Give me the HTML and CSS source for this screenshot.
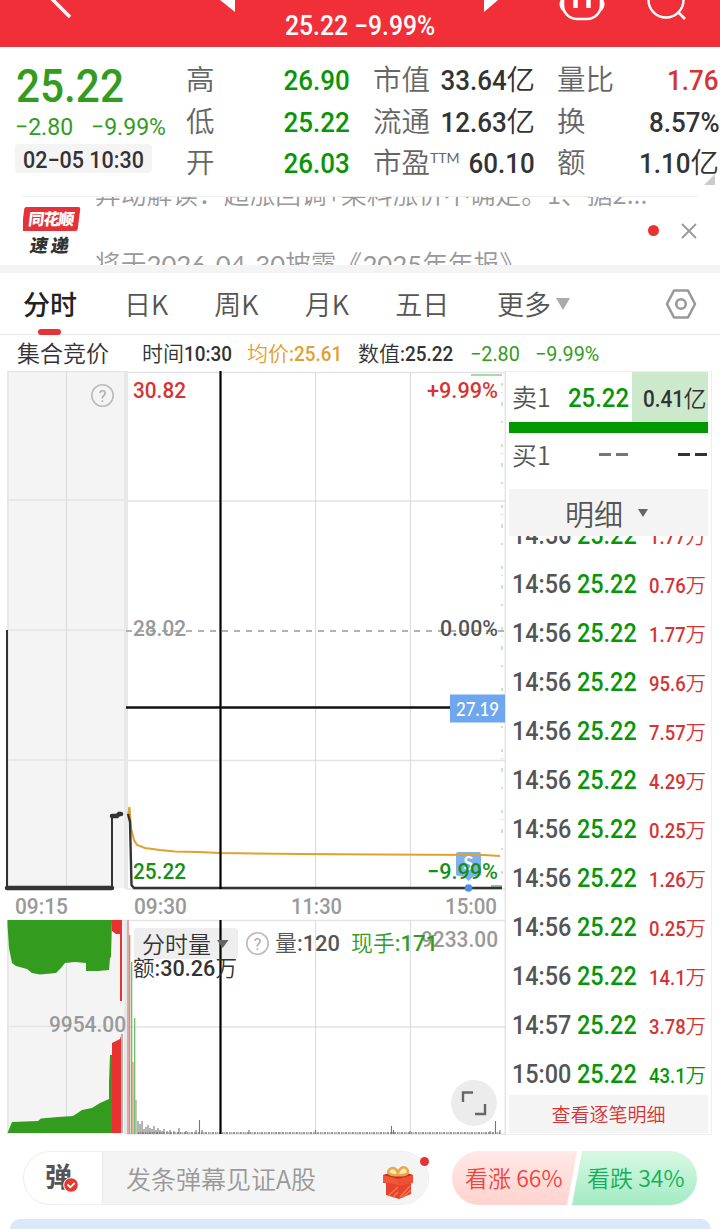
FILE: index.html
```html
<!DOCTYPE html>
<html lang="zh-CN">
<head>
    <meta charset="UTF-8">
    <meta name="viewport" content="width=device-width, initial-scale=1.0">
    <title>分时行情</title>
    <link rel="stylesheet" href="styles.css">
</head>
<body>
    <header class="topbar">
        <svg class="topbar-icons" width="720" height="47" viewBox="0 0 720 47">
            <path d="M46 -7L70 17" stroke="#fff" stroke-width="3.5" fill="none"/>
            <path d="M220 0H235V12Z" fill="#fff"/>
            <path d="M484 0H498L484 12Z" fill="#fff"/>
            <rect x="563" y="-18" width="38" height="37" rx="14" fill="none" stroke="#fff" stroke-width="2.6"/>
            <path d="M562 0Q559 5 563 10M602 0Q605 5 601 10" fill="none" stroke="#fff" stroke-width="2.5"/>
            <path d="M575.5 0V8M588.5 0V8" stroke="#fff" stroke-width="4.5"/>
            <circle cx="666" cy="0" r="17.5" fill="none" stroke="#fff" stroke-width="2.4"/>
            <path d="M678 12L685 19" stroke="#fff" stroke-width="2.6"/>
        </svg>
        <div class="topbar-price"><span class="num">25.22 −9.99%</span></div>
    </header>

    <section class="quote">
        <div class="quote-main">
            <div class="price"><span class="num">25.22</span></div>
            <div class="change"><span class="num">−2.80</span><span class="num">−9.99%</span></div>
            <div class="time"><span class="num">02−05 10:30</span></div>
        </div>
        <dl class="stats stats-a">
            <dt>高</dt><dd class="green"><span class="num">26.90</span></dd>
            <dt>低</dt><dd class="green"><span class="num">25.22</span></dd>
            <dt>开</dt><dd class="green"><span class="num">26.03</span></dd>
        </dl>
        <dl class="stats stats-b">
            <dt>市值</dt><dd><span class="num">33.64</span>亿</dd>
            <dt>流通</dt><dd><span class="num">12.63</span>亿</dd>
            <dt>市盈<sup>TTM</sup></dt><dd><span class="num">60.10</span></dd>
        </dl>
        <dl class="stats stats-c">
            <dt>量比</dt><dd class="red"><span class="num">1.76</span></dd>
            <dt>换</dt><dd><span class="num">8.57%</span></dd>
            <dt>额</dt><dd><span class="num">1.10</span>亿</dd>
        </dl>
        <i class="corner"></i>
    </section>

    <section class="news">
        <div class="logo">
            <div class="logo-top">同花顺</div>
            <div class="logo-bottom">速递</div>
        </div>
        <div class="news-lines">
            <p>异动解读：超涨回调+染料涨价不确定。1、据2...</p>
            <p>将于<span class="date">2026-04-30</span>披露《<span class="date">2025</span>年年报》</p>
        </div>
        <i class="dot"></i>
        <svg class="close" width="16" height="16" viewBox="0 0 16 16"><path d="M1 1L15 15M15 1L1 15" stroke="#999" stroke-width="1.8"/></svg>
    </section>

    <nav class="tabs">
        <a class="tab active">分时</a>
        <a class="tab">日K</a>
        <a class="tab">周K</a>
        <a class="tab">月K</a>
        <a class="tab">五日</a>
        <a class="tab more">更多<i class="caret"></i></a>
        <svg class="setting" width="32" height="32" viewBox="0 0 32 32" fill="none" stroke="#999" stroke-linejoin="round">
            <path d="M9 2.5H23L30 16L23 29.500H9L2 16Z" stroke-width="2.6"/>
            <circle cx="16" cy="16" r="4.800" stroke-width="2.600"/>
        </svg>
    </nav>

    <div class="info">
        <span class="info-auction">集合竞价</span>
        <span class="info-time">时间<span class="num">10:30</span></span>
        <span class="info-avg">均价<span class="num">:25.61</span></span>
        <span class="info-value">数值<span class="num">:25.22</span></span>
        <span class="info-diff"><span class="num">−2.80</span></span>
        <span class="info-rate"><span class="num">−9.99%</span></span>
    </div>

    <main class="board">
        <svg class="chart" width="506" height="764" viewBox="0 371 506 764">
            <!-- auction panel -->
            <rect x="7" y="371" width="118" height="517" fill="#f4f4f4"/>
            <rect x="7" y="920" width="118" height="214" fill="#f4f4f4"/>
            <g stroke="#e4e4e4" stroke-width="1.500" fill="none">
                <path d="M7 371.500H126M7 500H126M7 630H126M7 760H126M7 1026.500H126M8 371V888M8 920V1134"/>
                <path d="M126 372.500H505M126 501H505M126 760.500H505M126 889H505M7 920.500H505M126 1027H505M126 1134H505M505.300 371V1135"/>
            </g>
            <path d="M66.500 371V888M66.500 920V1134M315.500 372V888M410.500 372V888M315.500 920V1134M410.500 920V1134" stroke="#ddd" stroke-width="1.200"/>
            <path d="M126 371V889M126 920V1134" stroke="#e8e8e8" stroke-width="4"/>
            <path d="M126 631H504" stroke="#999" stroke-width="1.500" stroke-dasharray="6 6"/>

            <!-- pale depth marks by the right edge -->
            <path d="M471 375H502" stroke="#8ccc8c" stroke-width="1.500"/>
            <path d="M502 383V878" stroke="#a9d8a9" stroke-width="1.300" stroke-dasharray="3 6 1 9 4 15 2 21"/>
            <path d="M491 886H502" stroke="#8ccc8c" stroke-width="2"/>

            <!-- auction price -->
            <path d="M7 630V888M112 888V816" stroke="#333" stroke-width="2"/>
            <path d="M7 888H112" stroke="#333" stroke-width="4.500" stroke-linecap="round"/>
            <path d="M112 816H117L119 814H121" stroke="#333" stroke-width="4.500" stroke-linecap="round" fill="none"/>

            <!-- marker -->
            <path d="M458 852H479Q481 852 481 854V874Q481 876 479 876H474L468.500 881L463 876H458Q456 876 456 874V854Q456 852 458 852Z" fill="#7db1f2"/>
            <text x="468.500" y="870" class="marker" text-anchor="middle">S</text>

            <!-- average and price -->
            <path d="M128 815L129.500 807L131 828L134 840L137 845L145 848L160 850L175 851.500L198 852L220 853L300 854L380 854.500L484 855L500 856" stroke="#e2a02c" stroke-width="2" fill="none"/>
            <path d="M128 814L130 822L131.500 885L134 888H502" stroke="#333" stroke-width="2.400" fill="none"/>
            <circle cx="468.500" cy="888" r="3.800" fill="#4a8fe7"/>

            <!-- auction volume -->
            <path d="M7.500 920V925L9 948L12 963L16 966L27 969L32 973L40 974.500L56 973L61 968L65 963L75 962L86 963V971L98 971L109 970L110 958L111 957L112 920Z" fill="#339c1f"/>
            <path d="M112 920H122V1001H120V934L116 934L112 931Z" fill="#e83232"/>
            <path d="M7.500 1133L12 1122L38 1121L41 1118.500L58 1117L73 1116L82 1110L92 1108L100 1103L109 1099V1082L110 1055H112V1133Z" fill="#339c1f"/>
            <path d="M112 1133V1043L120 1039L121 1036V1133Z" fill="#e83232"/>
            <path d="M122 1034V1133" stroke="#777" stroke-width="1"/>

            <!-- minute volume -->
            <path d="M128 920V1134" stroke="#e9a3a3" stroke-width="2"/>
            <path d="M129.700 935V1134M131.700 962V1134M134.700 1018V1134" stroke="#6bb35c" stroke-width="1.200"/>
            <path d="M133 1062V1134" stroke="#e08a7a" stroke-width="1.200"/>
            <path d="M136 1100V1134" stroke="#8fae8a" stroke-width="1.200"/>
            <path d="M138 1121V1134M140 1124V1134M142 1121V1134M144 1129V1134M146 1127V1134M148 1125V1134M150 1128V1134M152 1129V1134M154 1126V1134M156 1130V1134M158 1128V1134M160 1130V1134M162 1131V1134M164 1129V1134M167 1131V1134M170 1130V1134M174 1131V1134M179 1128V1134M186 1131V1134M196 1130V1134M199.500 1120V1134M202 1130V1134M249 1130V1134M279 1132V1134M315.500 1130V1134M391.500 1126V1134M393.500 1130V1134M410 1131V1134M490 1131V1134M495.500 1121V1134M500 1130V1134" stroke="#777" stroke-width="1.100"/>
            <path d="M138 1133H500" stroke="#777" stroke-width="1.500" stroke-dasharray="1.500 .8 1 .7 2 1"/>

            <rect x="134" y="928" width="104" height="31" rx="3" fill="#eee"/>

            <!-- crosshair -->
            <path d="M220.500 371V889M220.500 920V1134" stroke="#000" stroke-width="2.200"/>
            <path d="M217 940H228.500L222.700 948Z" fill="#666"/>
            <path d="M126 707.500H450" stroke="#111" stroke-width="2.400"/>
            <rect x="450" y="694.500" width="55" height="28" fill="#6ea7ee"/>
            <text x="456" y="716" class="cross-label" textLength="43" lengthAdjust="spacingAndGlyphs">27.19</text>

            <g class="chart-text" font-size="22">
                <text x="133" y="398" fill="#d63434" textLength="53" lengthAdjust="spacingAndGlyphs">30.82</text>
                <text x="427" y="398" fill="#d63434" textLength="71" lengthAdjust="spacingAndGlyphs">+9.99%</text>
                <text x="133" y="636" fill="#999" textLength="53" lengthAdjust="spacingAndGlyphs">28.02</text>
                <text x="440" y="636" fill="#555" textLength="58" lengthAdjust="spacingAndGlyphs">0.00%</text>
                <text x="133" y="879" fill="#149114" textLength="53" lengthAdjust="spacingAndGlyphs">25.22</text>
                <text x="427" y="879" fill="#149114" textLength="71" lengthAdjust="spacingAndGlyphs">−9.99%</text>
                <text x="15" y="914" fill="#999" textLength="53" lengthAdjust="spacingAndGlyphs">09:15</text>
                <text x="134" y="914" fill="#999" textLength="53" lengthAdjust="spacingAndGlyphs">09:30</text>
                <text x="291" y="914" fill="#999" textLength="51" lengthAdjust="spacingAndGlyphs">11:30</text>
                <text x="445" y="914" fill="#999" textLength="52" lengthAdjust="spacingAndGlyphs">15:00</text>
                <text x="49" y="1032" fill="#999" textLength="77" lengthAdjust="spacingAndGlyphs">9954.00</text>
                <text x="421" y="947" fill="#999" textLength="77" lengthAdjust="spacingAndGlyphs">9233.00</text>
                <text x="142" y="953" class="cn" fill="#333" font-size="23">分时量</text>
                <text x="133" y="976" class="cn" fill="#333" textLength="104" lengthAdjust="spacingAndGlyphs">额<tspan class="fig">:30.26</tspan>万</text>
                <text x="275" y="951" class="cn" fill="#555" textLength="65" lengthAdjust="spacingAndGlyphs">量<tspan class="fig">:120</tspan></text>
                <text x="351" y="951" class="cn" fill="#339c1f" textLength="87" lengthAdjust="spacingAndGlyphs">现手<tspan class="fig">:171</tspan></text>
            </g>
            <g fill="none" stroke="#bbb" stroke-width="1.600">
                <circle cx="102.500" cy="395.500" r="10.700"/>
                <circle cx="257.500" cy="943.500" r="10.700"/>
            </g>
            <g class="help" text-anchor="middle">
                <text x="102.500" y="401.500">?</text>
                <text x="257.500" y="949.500">?</text>
            </g>

            <circle cx="474" cy="1103" r="23" fill="#ececec"/>
            <path d="M463 1102V1092.500H473M485 1104V1114H475" fill="none" stroke="#666" stroke-width="2.400"/>
        </svg>

        <aside class="side">
            <div class="order sell">
                <span class="order-name">卖1</span>
                <span class="order-price green"><span class="num">25.22</span></span>
                <span class="order-amount"><span class="num">0.41</span>亿</span>
            </div>
            <div class="ratio"></div>
            <div class="order buy">
                <span class="order-name">买1</span>
                <span class="dashes"><i></i><i></i></span>
                <span class="dashes dark"><i></i><i></i></span>
            </div>
            <div class="detail-head">明细<i class="caret"></i></div>
            <div class="trades">
                <div class="trade"><span class="num t">14:56</span><span class="num p">25.22</span><span class="amt"><span class="num">1.77</span>万</span></div>
                <div class="trade"><span class="num t">14:56</span><span class="num p">25.22</span><span class="amt"><span class="num">0.76</span>万</span></div>
                <div class="trade"><span class="num t">14:56</span><span class="num p">25.22</span><span class="amt"><span class="num">1.77</span>万</span></div>
                <div class="trade"><span class="num t">14:56</span><span class="num p">25.22</span><span class="amt"><span class="num">95.6</span>万</span></div>
                <div class="trade"><span class="num t">14:56</span><span class="num p">25.22</span><span class="amt"><span class="num">7.57</span>万</span></div>
                <div class="trade"><span class="num t">14:56</span><span class="num p">25.22</span><span class="amt"><span class="num">4.29</span>万</span></div>
                <div class="trade"><span class="num t">14:56</span><span class="num p">25.22</span><span class="amt"><span class="num">0.25</span>万</span></div>
                <div class="trade"><span class="num t">14:56</span><span class="num p">25.22</span><span class="amt"><span class="num">1.26</span>万</span></div>
                <div class="trade"><span class="num t">14:56</span><span class="num p">25.22</span><span class="amt"><span class="num">0.25</span>万</span></div>
                <div class="trade"><span class="num t">14:56</span><span class="num p">25.22</span><span class="amt"><span class="num">14.1</span>万</span></div>
                <div class="trade"><span class="num t">14:57</span><span class="num p">25.22</span><span class="amt"><span class="num">3.78</span>万</span></div>
                <div class="trade"><span class="num t">15:00</span><span class="num p">25.22</span><span class="amt green"><span class="num">43.1</span>万</span></div>
            </div>
            <div class="detail-foot">查看逐笔明细</div>
        </aside>
    </main>

    <footer class="bottom">
        <div class="danmu">
            <div class="danmu-switch">弹
                <svg class="check" width="16" height="16" viewBox="0 0 16 16"><circle cx="8" cy="8" r="7.300" fill="#e8392f" stroke="#fff"/><path d="M4.500 7.500L7.300 10.300L11.700 6" fill="none" stroke="#fff" stroke-width="1.800"/></svg>
            </div>
            <div class="danmu-input">发条弹幕见证A股
                <svg class="gift" width="32" height="34" viewBox="0 0 32 34">
                    <path d="M1 9L16 5L31 9V17H29V28L17 33L4 29V17H1Z" fill="#e5432c"/>
                    <path d="M1 9L16 13L31 9L16 5Z" fill="#c42f20"/>
                    <path d="M1 9L16 13V19L1 16Z" fill="#f0583a"/>
                    <path d="M16 13L31 9V17L16 20Z" fill="#ee5036"/>
                    <path d="M6 30L16 21M11 31L16 26M18 31L28 20M21 31L29 24" stroke="#f47852" stroke-width="1.500"/>
                    <path d="M16 9C7 10 4 6 8 3C12 0 16 4 16 9C16 3 21 -1 25 3C28 7 24 10 16 9Z" fill="#fbe6b8" stroke="#e9aa45" stroke-width="2.500"/>
                </svg>
            </div>
            <i class="badge"></i>
        </div>
        <div class="vote">
            <svg class="vote-bg" width="245" height="54" viewBox="0 0 245 54">
                <defs>
                    <linearGradient id="up" x2="0" y2="1"><stop stop-color="#ffe9e7"/><stop offset="1" stop-color="#ffd3cf"/></linearGradient>
                    <linearGradient id="down" x2="0" y2="1"><stop stop-color="#d9f8e5"/><stop offset="1" stop-color="#a3ebc2"/></linearGradient>
                </defs>
                <path d="M27 0H125L115 54H27A27 27 0 0 1 27 0Z" fill="url(#up)"/>
                <path d="M130 0H218A27 27 0 0 1 218 54H120Z" fill="url(#down)"/>
            </svg>
            <span class="vote-up">看涨 66%</span>
            <span class="vote-down">看跌 34%</span>
        </div>
    </footer>
    <div class="next-card"></div>
</body>
</html>
```
FILE: styles.css
```css
*{
    box-sizing:border-box;
}
body{
    margin:0;
    width:720px;
    height:1229px;
    overflow:hidden;
    background:#fff;
    color:#333;
    font-family:"Noto Sans CJK SC",sans-serif;
    font-weight:350;
}
p,dl,dd{
    margin:0;
}
i{
    display:block;
}
/* narrow figures */
.num{
    display:inline-block;
    font-family:Roboto,"Noto Sans CJK SC",sans-serif;
    font-weight:500;
    white-space:pre;
    transform:scaleX(.9);
    transform-origin:left;
}
.green{
    color:#069606;
}
.red{
    color:#d63434;
}

.topbar{
    position:relative;
    height:47px;
    background:#f12f38;
    overflow:hidden;
}
.topbar-icons{
    position:absolute;
    left:0;
    top:0;
}
.topbar-price{
    padding-top:8px;
    text-align:center;
    line-height:32px;
    font-size:27px;
    color:#fff;
}
.topbar-price .num{
    transform:scaleX(.915);
    transform-origin:center;
}

.quote{
    position:relative;
    display:flex;
    height:149px;
    padding-top:11px;
}
.quote-main{
    flex:none;
    width:186px;
    padding-left:15px;
}
.price{
    height:56px;
    padding-left:1px;
    line-height:47px;
    font-size:47px;
    color:#339c1f;
}
.change{
    display:flex;
    height:25px;
    line-height:26px;
    font-size:24px;
    color:#339c1f;
}
.change .num{
    transform:scaleX(.96);
    font-weight:400;
}
.change .num:first-child{
    width:76px;
}
.time{
    width:137px;
    height:29px;
    margin-top:5px;
    padding-left:8px;
    background:#f4f4f4;
    border-radius:4px;
    line-height:28px;
    font-size:23px;
}
.time .num{
    transform:scaleX(.935);
}
.stats{
    flex:none;
    display:grid;
    grid-template-columns:57px 1fr;
    grid-auto-rows:41.5px;
    line-height:39px;
    font-size:28.5px;
}
.stats dt{
    color:#666;
    white-space:nowrap;
}
.stats dd{
    text-align:right;
    white-space:nowrap;
}
.stats .num{
    transform:scaleX(.91);
    transform-origin:right;
}
.stats-a{
    width:164px;
}
.stats-b{
    width:162px;
    margin-left:23px;
}
.stats-c{
    width:162px;
    margin-left:22px;
}
.stats sup{
    font-family:Lato,sans-serif;
    font-weight:400;
    font-size:14px;
    line-height:0;
    vertical-align:10px;
}
.corner{
    position:absolute;
    right:5px;
    bottom:11px;
    border-left:11px solid transparent;
    border-bottom:11px solid #ccc;
}

.news{
    display:flex;
    height:69px;
    margin:0 23px;
    border-top:1px solid #eee;
    overflow:hidden;
}
.logo{
    flex:none;
    width:57px;
    padding-top:10px;
    text-align:center;
    font-weight:900;
}
.logo-top{
    height:24px;
    margin-right:1px;
    background:#e53238;
    border-radius:2px;
    line-height:23px;
    font-size:16px;
    letter-spacing:-1px;
    color:#fff;
    transform:skewX(-7deg);
}
.logo-bottom{
    height:24px;
    line-height:26px;
    font-size:18px;
    letter-spacing:3px;
    transform:skewX(-10deg);
}
.news-lines{
    flex:none;
    width:552px;
    margin-left:15px;
    color:#999;
    font-size:25.75px;
}
.news-lines p{
    height:62px;
    line-height:40px;
    margin-top:-24px;
    white-space:nowrap;
}
.news-lines p + p{
    margin-top:8px;
}
.date{
    font-family:Lato,sans-serif;
    font-weight:400;
}
.dot{
    flex:none;
    width:11px;
    height:11px;
    margin-top:28px;
    margin-left:1px;
    border-radius:50%;
    background:#e53232;
}
.close{
    flex:none;
    margin:26px 0 0 22px;
}

.tabs{
    display:flex;
    align-items:center;
    height:70px;
    padding:0 23px;
    border-top:8px solid #f4f4f4;
    border-bottom:1px solid #e8e8e8;
    font-size:27px;
    color:#555;
}
.tab{
    position:relative;
    width:90.5px;
    line-height:60px;
}
.tab.active{
    width:101px;
    color:#222;
    font-weight:500;
}
.tab.active::after{
    content:"";
    position:absolute;
    left:15px;
    bottom:-1px;
    width:23px;
    height:6px;
    border-radius:3px;
    background:#e53238;
}
.tab:nth-child(5){
    width:102px;
}
.tab.more{
    display:flex;
    align-items:center;
    width:168px;
}
.tab .caret{
    margin-left:5px;
    border:7.5px solid transparent;
    border-top:12px solid #aaa;
    border-bottom:0;
}
.setting{
    flex:none;
}

.info{
    display:flex;
    height:36px;
    padding-left:17px;
    line-height:35px;
    font-size:21px;
    white-space:nowrap;
}
.info-auction{
    width:125px;
    font-size:23px;
}
.info-time{
    width:105px;
}
.info-avg{
    width:111px;
    color:#e2a02c;
}
.info-value{
    width:112px;
}
.info-diff{
    width:65px;
}
.info-diff,.info-rate{
    color:#339c1f;
}
.info-diff .num,.info-rate .num{
    transform:scaleX(.94);
    font-weight:400;
}

.board{
    display:flex;
    height:764px;
}
.chart{
    flex:none;
}
.chart-text{
    font-family:Roboto,"Noto Sans CJK SC",sans-serif;
    font-weight:500;
}
.cn{
    font-weight:350;
}
.fig{
    font-weight:500;
}
.marker{
    font:bold 18px Lato,sans-serif;
    fill:#fff;
}
.cross-label{
    font:500 19px Lato,sans-serif;
    fill:#fff;
}
.help{
    font:16px Roboto,sans-serif;
    fill:#aaa;
}
.side{
    width:206px;
    padding:0 3px;
    border:1px solid #eee;
    border-left:0;
}
.order{
    display:flex;
    align-items:center;
    padding-left:3px;
    font-size:26px;
    line-height:34px;
}
.sell{
    height:50px;
}
.order-name{
    width:56px;
    color:#555;
    font-size:25px;
}
.sell .order-name{
    padding-bottom:3px;
}
.order-price{
    width:64px;
    padding-bottom:1px;
}
.order-price .num{
    transform:scaleX(.92);
}
.order-amount{
    width:76px;
    height:50px;
    padding-left:11px;
    background:#cce9cc;
    line-height:51px;
    font-size:23px;
    white-space:nowrap;
}
.order-amount .num{
    margin-right:-5px;
}
.ratio{
    height:11px;
    background:#009900;
}
.buy{
    height:56px;
    padding-bottom:15px;
}
.dashes{
    display:flex;
    gap:5px;
    margin:2px 0 0 31px;
    color:#777;
}
.dashes i{
    width:12px;
    height:2.5px;
    background:currentColor;
}
.dashes.dark{
    margin-left:50px;
    color:#333;
}
.detail-head{
    display:flex;
    align-items:center;
    justify-content:center;
    gap:15px;
    height:47px;
    padding-right:4px;
    background:#f4f4f4;
    color:#555;
    font-size:29px;
}
.detail-head .caret{
    border:5px solid transparent;
    border-top:8px solid #666;
    border-bottom:0;
}
.trades{
    height:559px;
    overflow:hidden;
}
.trade{
    display:flex;
    align-items:center;
    height:49px;
    padding-left:3px;
    font-size:26px;
}
.trade:first-child{
    margin-top:-26px;
}
.trade .t{
    width:65px;
    color:#555;
}
.trade .p{
    width:65px;
    color:#069606;
}
.trade .amt{
    flex:1;
    padding:1px 2px 0 0;
    text-align:right;
    white-space:nowrap;
    font-size:20.5px;
    color:#d63434;
}
.trade .amt.green{
    color:#069606;
}
.trade .amt .num{
    transform-origin:right;
}
.detail-foot{
    height:38px;
    background:#f4f4f4;
    text-align:center;
    line-height:38px;
    font-size:19px;
    color:#d63434;
}

.bottom{
    display:flex;
    padding:16px 23px 14px;
}
.danmu{
    position:relative;
    display:flex;
    width:406px;
    height:54px;
    border:1px solid #eee;
    border-radius:27px;
}
.danmu-switch{
    position:relative;
    width:79px;
    padding-left:21px;
    line-height:48px;
    font-size:27px;
    font-weight:700;
    color:#555;
    border-right:1px solid #e8e8e8;
}
.check{
    position:absolute;
    left:39px;
    top:25px;
}
.danmu-input{
    display:flex;
    flex:1;
    justify-content:space-between;
    padding:0 14px 0 23px;
    border-radius:0 27px 27px 0;
    background:#f4f4f4;
    line-height:52px;
    font-size:25px;
    color:#999;
}
.gift{
    margin-top:14px;
}
.badge{
    position:absolute;
    right:-1px;
    top:5px;
    width:9px;
    height:9px;
    border-radius:50%;
    background:#e53232;
}
.vote{
    position:relative;
    display:flex;
    width:245px;
    height:54px;
    margin-left:23px;
    line-height:52px;
    font-size:23px;
    white-space:nowrap;
}
.vote-bg{
    position:absolute;
    left:0;
    top:0;
}
.vote span{
    position:relative;
    width:122px;
    padding-left:13px;
    color:#f0443c;
}
.vote .vote-down{
    color:#13b05a;
}
.next-card{
    height:30px;
    margin:0 9px 0 10px;
    border-radius:10px 10px 0 0;
    background:#d9e8fa;
}
```
